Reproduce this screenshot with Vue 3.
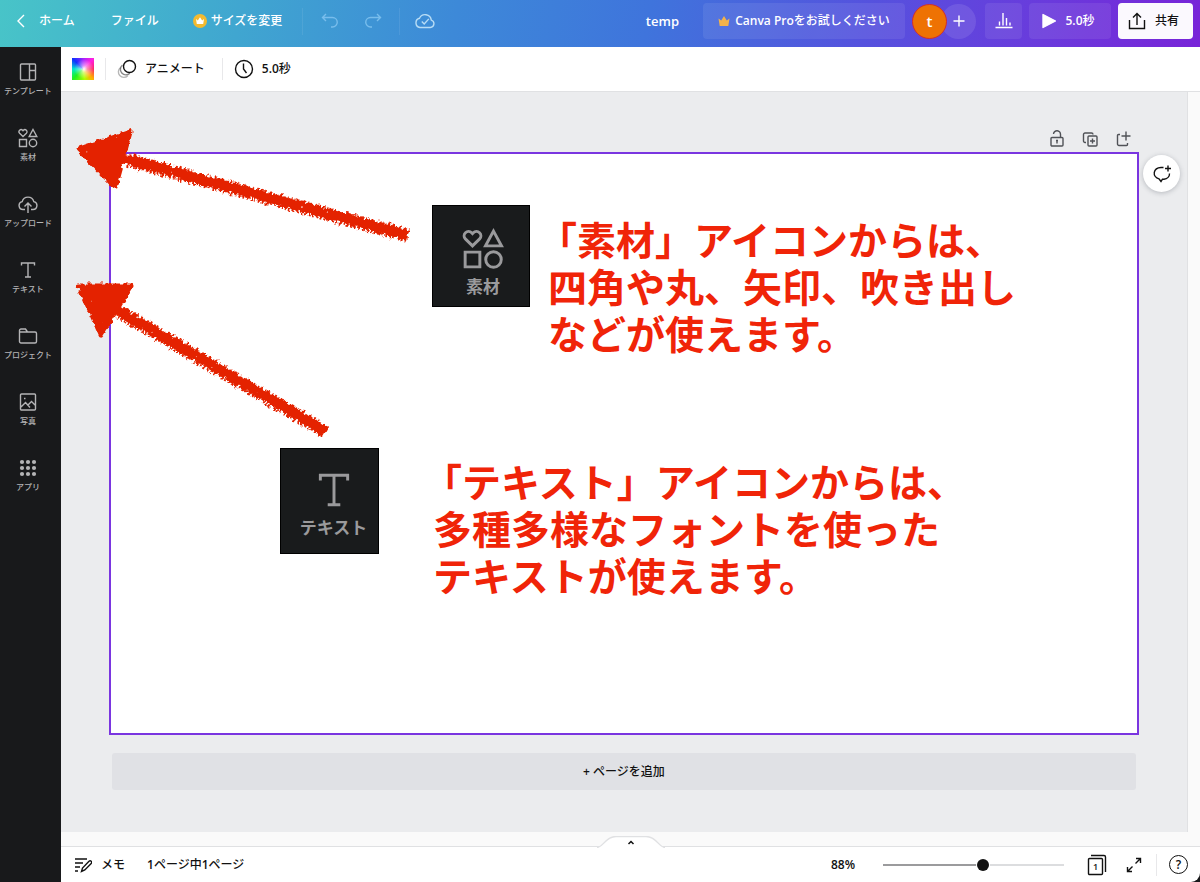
<script setup>
import { ref, computed } from 'vue'

const zoom = ref(88)
const zoomMax = 158
const fill = computed(() => `${(zoom.value / zoomMax) * 100}%`)

const tools = [
  { id: 'template', label: 'テンプレート' },
  { id: 'elements', label: '素材' },
  { id: 'upload', label: 'アップロード' },
  { id: 'text', label: 'テキスト' },
  { id: 'project', label: 'プロジェクト' },
  { id: 'photo', label: '写真' },
  { id: 'apps', label: 'アプリ' },
]
const dots = [4, 10, 16]
</script>

<template>
  <div class="app">
    <header class="topbar">
      <button class="plain home">
        <svg width="18" height="18" viewBox="0 0 18 18"><path d="M12 3 6 9l6 6" /></svg>
        <span>ホーム</span>
      </button>
      <button class="plain file">ファイル</button>
      <button class="plain resize">
        <svg width="14" height="14" viewBox="0 0 14 14" class="solid">
          <circle cx="7" cy="7" r="7" fill="#f3ba2f" />
          <path d="M3 5l1.800 1.500L7 3.200l2.200 3.300L11 5l-.8 5H3.800z" fill="#fff" />
        </svg>
        <span>サイズを変更</span>
      </button>
      <i class="rule first"></i>
      <button class="plain undo" aria-label="元に戻す">
        <svg width="18" height="18" viewBox="0 0 18 18"><path d="M5 2 1.500 5.500 5 9M2 5.500h9.500a4.700 4.700 0 0 1 0 9.500H10" /></svg>
      </button>
      <button class="plain redo" aria-label="やり直す">
        <svg width="18" height="18" viewBox="0 0 18 18"><path d="M13 2l3.500 3.500L13 9M16 5.500H6.500a4.700 4.700 0 0 0 0 9.500H8" /></svg>
      </button>
      <i class="rule"></i>
      <button class="plain cloud" aria-label="保存済み">
        <svg width="20" height="18" viewBox="0 0 20 18"><path d="M5 15.500h10.300a3.800 3.800 0 0 0 1-7.400A6.200 6.200 0 0 0 4.500 6.300 4.700 4.700 0 0 0 5 15.500zM6.800 9.500l2.400 2.400 4.600-5" /></svg>
      </button>

      <div class="right">
        <span class="title">temp</span>
        <button class="pill pro">
          <svg width="12" height="12" viewBox="0 0 12 12" class="solid"><path d="M.5 3.500 3.200 5.500 6 1l2.800 4.500 2.700-2L10.300 11H1.700z" fill="#f3b34a" /></svg>
          <span><b>Canva Pro</b>をお試しください</span>
        </button>
        <div class="people">
          <button class="avatar">t</button>
          <button class="add" aria-label="メンバーを追加">
            <svg width="12" height="12" viewBox="0 0 12 12"><path d="M6 .5v11M.5 6h11" /></svg>
          </button>
        </div>
        <button class="pill chart" aria-label="分析">
          <svg width="18" height="18" viewBox="0 0 18 18"><path d="M.5 15.500h17M4.500 13.500v-4M8 13.500V1M11.500 13.500V6M15 13.500v-3" /></svg>
        </button>
        <button class="pill play">
          <svg width="14" height="16" viewBox="0 0 14 16" class="solid"><path d="M1 1.500v13l12.500-6.500z" fill="#fff" stroke="#fff" stroke-linejoin="round" /></svg>
          <span><b>5.0</b>秒</span>
        </button>
        <button class="pill share">
          <svg width="18" height="18" viewBox="0 0 18 18"><path d="M1.500 8v8.500h15V8M9 13V1.500M5 5.500l4-4 4 4" /></svg>
          <span>共有</span>
        </button>
      </div>
    </header>

    <div class="body">
      <nav class="sidebar">
        <button v-for="t in tools" :key="t.id" class="tool">
          <svg width="20" height="20" viewBox="0 0 20 20">
            <path v-if="t.id === 'template'" d="M3.500 2h13a1 1 0 0 1 1 1v14a1 1 0 0 1-1 1h-13a1 1 0 0 1-1-1V3a1 1 0 0 1 1-1zM11.500 2v16M11.500 8.500h6" />
            <g v-else-if="t.id === 'elements'">
              <path d="M5 8.500 1.600 5.200a2 2 0 0 1 3-2.900l.4.400.4-.4a2 2 0 0 1 3 2.900zM15 1.500l3.800 7h-7.600zM1.500 11.500h7v7h-7z" />
              <circle cx="15" cy="15" r="3.700" />
            </g>
            <path v-else-if="t.id === 'upload'" d="M7 15.500H5a4 4 0 0 1-.8-7.900 6 6 0 0 1 11.600 0 4 4 0 0 1-.8 7.900h-2M10 19V9.500M6.500 12.500 10 9l3.500 3.500" />
            <path v-else-if="t.id === 'text'" d="M3.500 5.500V3h13v2.500M10 3v14M7 17h6" />
            <path v-else-if="t.id === 'project'" d="M1.500 6.500v-2a1.500 1.500 0 0 1 1.500-1.500h4.500l2 3h7.500a1.500 1.500 0 0 1 1.500 1.500v8a1.500 1.500 0 0 1-1.500 1.500H3a1.500 1.500 0 0 1-1.500-1.500zM1.500 6h9" />
            <path v-else-if="t.id === 'photo'" d="M3.500 2h13a1 1 0 0 1 1 1v14a1 1 0 0 1-1 1h-13a1 1 0 0 1-1-1V3a1 1 0 0 1 1-1zM3 15l4.500-4.500L12 15.500M10 13l3.500-3.500L17 13M6 6.500h1.500" />
            <g v-else class="dots">
              <template v-for="x in dots" :key="x">
                <circle v-for="y in dots" :key="y" :cx="x" :cy="y" r="2.100" />
              </template>
            </g>
          </svg>
          <span>{{ t.label }}</span>
        </button>
      </nav>

      <main class="main">
        <div class="toolbar">
          <button class="swatch" aria-label="背景色"></button>
          <i class="rule"></i>
          <button class="plain animate">
            <svg width="20" height="20" viewBox="0 0 20 20">
              <path d="M5.500 6a5.500 5.500 0 1 0 7.300 8.200" opacity=".5" />
              <path d="M3.500 8.500a5.500 5.500 0 1 0 7.300 8.200" opacity=".3" />
              <circle cx="12.500" cy="7.500" r="6" />
            </svg>
            <span>アニメート</span>
          </button>
          <i class="rule"></i>
          <button class="plain">
            <svg width="20" height="20" viewBox="0 0 20 20"><circle cx="10" cy="10" r="8.500" /><path d="M9.500 4.500V10l3 4" /></svg>
            <span><b>5.0</b>秒</span>
          </button>
        </div>

        <div class="scroller">
          <section class="stage">
            <div class="page-actions">
              <button class="plain" aria-label="ロック">
                <svg width="16" height="18" viewBox="0 0 16 18"><path d="M3 7.500h10a1 1 0 0 1 1 1V15a1 1 0 0 1-1 1H3a1 1 0 0 1-1-1V8.500a1 1 0 0 1 1-1zM4.500 4A3.500 3.500 0 0 1 11.500 4.500v3M8 10v3.500M7 10.500h2" /></svg>
              </button>
              <button class="plain" aria-label="複製">
                <svg width="16" height="18" viewBox="0 0 16 18"><path d="M7 6h7a1 1 0 0 1 1 1v8a1 1 0 0 1-1 1H7a1 1 0 0 1-1-1V7a1 1 0 0 1 1-1zM4 12.500H3A1.500 1.500 0 0 1 1.500 11V4.500A1.500 1.500 0 0 1 3 3h6.500A1.500 1.500 0 0 1 11 4.500M10.500 8.500v5M8 11h5" /></svg>
              </button>
              <button class="plain" aria-label="ページを追加">
                <svg width="16" height="18" viewBox="0 0 16 18"><path d="M5 4.500H3.500A1 1 0 0 0 2.500 5.500V14a1.500 1.500 0 0 0 1.500 1.500h7.500a1 1 0 0 0 1-1V13M11 1.500v9M6.500 6h9" /></svg>
              </button>
            </div>

            <article class="page">
              <svg class="arrows" width="350" height="330" viewBox="70 120 350 330">
                <defs>
                  <filter id="crayon" filterUnits="userSpaceOnUse" x="60" y="110" width="370" height="350">
                    <feTurbulence type="fractalNoise" baseFrequency=".24" numOctaves="1" seed="7" result="n" />
                    <feDisplacementMap in="SourceGraphic" in2="n" scale="7" xChannelSelector="R" yChannelSelector="G" result="d" />
                    <feTurbulence type="fractalNoise" baseFrequency=".2" numOctaves="1" seed="12" />
                    <feColorMatrix values="0 0 0 0 0  0 0 0 0 0  0 0 0 0 0  14 0 0 0 -10.600" result="holes" />
                    <feComposite in="d" in2="holes" operator="out" />
                  </filter>
                </defs>
                <g filter="url(#crayon)">
                  <path class="head" d="M79 149 130 132 115 187z" />
                  <path class="shaft" d="M122 158 407 235" />
                  <path class="grain" d="M128 160 408 236" />
                  <path class="head" d="M79 286 131 286 101 335z" />
                  <path class="shaft" d="M112 307 325 431" />
                  <path class="grain" d="M120 312 326 432" />
                </g>
              </svg>

              <figure class="tile tile-elements">
                <svg width="42" height="42" viewBox="0 0 20 20">
                  <path d="M5 8.500 1.600 5.200a2 2 0 0 1 3-2.900l.4.400.4-.4a2 2 0 0 1 3 2.900zM15 1.500l3.800 7h-7.600zM1.500 11.500h7v7h-7z" />
                  <circle cx="15" cy="15" r="3.700" />
                </svg>
                <figcaption>素材</figcaption>
              </figure>
              <p class="note note-elements">「素材」アイコンからは、<br />四角や丸、矢印、吹き出し<br />などが使えます。</p>

              <figure class="tile tile-text">
                <svg width="42" height="42" viewBox="0 0 20 20"><path d="M3.500 5.500V3h13v2.500M10 3v14M7 17h6" /></svg>
                <figcaption>テキスト</figcaption>
              </figure>
              <p class="note note-text">「テキスト」アイコンからは、<br />多種多様なフォントを使った<br />テキストが使えます。</p>

              <button class="comment" aria-label="コメント">
                <svg width="22" height="22" viewBox="0 0 22 22"><path d="M12.500 4.500H10a7 5.800 0 0 0-2 11.300l2 2.700 1.500-2.300h1.500a6.500 5.500 0 0 0 5.500-5.700M17 2.500v6M14 5.500h6" /></svg>
              </button>
            </article>

            <button class="add-page"><b>+</b> ページを追加</button>
          </section>
        </div>

        <footer class="footer">
          <button class="handle" aria-label="ページ一覧を表示">
            <svg width="68" height="12" viewBox="0 0 68 12">
              <path d="M0 11.500C7 11 8 .5 19 .5h30C60 .5 61 11 68 11.500" fill="#fff" stroke="#e0e1e3" />
              <path d="M31.500 8 34 5.500 36.500 8" fill="none" stroke="#111" stroke-width="1.500" />
            </svg>
          </button>
          <button class="plain memo">
            <svg width="18" height="18" viewBox="0 0 18 18"><path d="M1 3h12M1 7h8M1 11h5M1 15h3M7.500 15.500l1-3.500 6.500-6.800a1.500 1.500 0 0 1 2.200 2.200L10.800 14z" /></svg>
            <span>メモ</span>
          </button>
          <span class="count"><b>1</b>ページ中<b>1</b>ページ</span>
          <div class="tail">
            <label for="zoom">{{ zoom }}%</label>
            <input id="zoom" v-model.number="zoom" type="range" min="0" :max="zoomMax" :style="{ '--fill': fill }" />
            <button class="plain pages" aria-label="グリッド表示">
              <svg width="20" height="22" viewBox="0 0 20 22"><path d="M2.500 4.500h12a1 1 0 0 1 1 1v14a1 1 0 0 1-1 1h-12a1 1 0 0 1-1-1v-14a1 1 0 0 1 1-1zM4 1.500h13a1.500 1.500 0 0 1 1.500 1.500v15" /></svg>
              <b>1</b>
            </button>
            <button class="plain full" aria-label="全画面表示">
              <svg width="16" height="16" viewBox="0 0 16 16"><path d="M10 1.500h4.500V6M14.500 1.500 9.500 6.500M1.500 10v4.500H6M1.500 14.500l5-5" /></svg>
            </button>
            <i class="rule"></i>
            <button class="help">?</button>
          </div>
        </footer>
      </main>
    </div>
  </div>
</template>

<style>
body {
  background: #18191b;
}
</style>

<style scoped>
.app {
  display: flex;
  flex-direction: column;
  height: 100vh;
  color: #111;
  font: 500 12px/18px "Open Sans", "Noto Sans CJK JP", sans-serif;
}
.app * {
  box-sizing: border-box;
}
b {
  font-weight: 600;
}
button {
  margin: 0;
  padding: 0;
  border: 0;
  background: none;
  color: inherit;
  font: inherit;
  white-space: nowrap;
}
svg {
  display: block;
  flex: none;
  fill: none;
  stroke: currentColor;
  stroke-width: 1.4;
}
.solid {
  stroke: none;
}
.plain {
  display: flex;
  align-items: center;
}

.topbar {
  display: flex;
  flex: none;
  align-items: center;
  height: 47px;
  padding: 0 7px 5px 12px;
  background: linear-gradient(100deg, #48c4c8 0%, #40a6d0 20%, #3d89d8 38%, #3f74dc 54%, #5552de 72%, #6a3adc 87%, #7824d8 100%);
  color: #fff;
}
.home {
  gap: 9px;
}
.file {
  margin-left: 36px;
}
.resize {
  gap: 4px;
  margin-left: 34px;
}
.topbar .rule {
  width: 1px;
  height: 27px;
  margin-left: 17px;
  background: rgba(255, 255, 255, 0.08);
}
.topbar .rule.first {
  margin-left: 20px;
}
.undo,
.redo {
  color: #78bdec;
}
.undo {
  margin-left: 18px;
}
.redo {
  margin-left: 25px;
}
.cloud {
  margin-left: 15px;
  color: #b7dcf5;
}
.right {
  display: flex;
  align-items: center;
  gap: 7px;
  margin-left: auto;
}
.title {
  margin-right: 17px;
  font-size: 13px;
  font-weight: 600;
}
.pill {
  display: flex;
  align-items: center;
  justify-content: center;
  height: 36px;
  border-radius: 4px;
  background: rgba(255, 255, 255, 0.08);
}
.pro {
  gap: 5px;
  width: 202px;
}
.people {
  display: flex;
}
.avatar,
.add {
  display: grid;
  place-items: center;
  width: 35px;
  height: 35px;
  border-radius: 50%;
}
.avatar {
  z-index: 1;
  border: 1px solid #cf2f2f;
  background: #ee7203;
  font-size: 15px;
  font-weight: 600;
}
.add {
  margin-left: -6px;
  background: rgba(255, 255, 255, 0.1);
}
.chart {
  width: 37px;
  margin-left: 2px;
}
.play {
  gap: 9px;
  width: 82px;
  padding-right: 3px;
}
.share {
  gap: 9px;
  width: 75px;
  padding-right: 4px;
  background: #fbf9fe;
  color: #111;
}

.body {
  display: flex;
  flex: 1;
  min-height: 0;
}
.sidebar {
  display: flex;
  flex: none;
  flex-direction: column;
  width: 61px;
  padding: 15px 5px 0 0;
  background: #18191b;
  color: #b4b4b6;
}
.tool {
  display: flex;
  flex-direction: column;
  align-items: center;
  gap: 3px;
  height: 66px;
  font-size: 8px;
  line-height: 12px;
}
.dots {
  fill: currentColor;
  stroke: none;
}

.main {
  display: flex;
  flex: 1;
  flex-direction: column;
  min-width: 0;
  background: #fafafa;
}
.toolbar {
  display: flex;
  flex: none;
  align-items: center;
  gap: 11px;
  height: 45px;
  padding: 0 11px;
  border-bottom: 1px solid #e0e1e3;
  background: #fff;
}
.toolbar .rule {
  width: 1px;
  height: 22px;
  background: #e8e8ea;
}
.toolbar .plain {
  gap: 8px;
}
.toolbar .animate {
  margin-right: 6px;
}
.swatch {
  width: 22px;
  height: 22px;
  background:
    radial-gradient(circle at 55% 50%, #fff 0, rgba(255, 255, 255, 0.5) 20%, rgba(255, 255, 255, 0) 60%),
    conic-gradient(#a020ff 0deg, #ff20e0 45deg, #ff2060 90deg, #ffb000 135deg, #b0ff00 170deg, #20f020 225deg, #00e8d0 270deg, #1030ff 315deg, #a020ff 360deg);
}
.scroller {
  flex: 1;
  min-height: 0;
  padding: 0 12px 14px 0;
}
.stage {
  display: flex;
  flex-direction: column;
  height: 100%;
  padding: 36px 48px 0;
  border-right: 1px solid #e0e1e3;
  background: #ebecee;
}
.page-actions {
  display: flex;
  gap: 17px;
  justify-content: flex-end;
  padding: 2px 8px 4px 0;
  color: #505257;
}
.page {
  position: relative;
  flex: none;
  aspect-ratio: 1030 / 583;
  border: 2px solid #7a35e0;
  background: #fff;
}
.arrows {
  position: absolute;
  top: -34px;
  left: -41px;
}
.head {
  fill: #e42400;
  stroke: #e42400;
  stroke-width: 5;
  stroke-linejoin: round;
}
.shaft {
  stroke: #e42400;
  stroke-width: 10;
}
.grain {
  stroke: #e42400;
  stroke-width: 14;
  stroke-dasharray: 2 2;
}
.tile {
  position: absolute;
  display: flex;
  flex-direction: column;
  align-items: center;
  margin: 0;
  border: 1px solid #000;
  background: #191b1c;
  color: #9a9a9c;
  font-size: 17px;
  font-weight: 700;
  line-height: 34px;
}
.tile-elements {
  top: 51px;
  left: 321px;
  width: 98px;
  height: 102px;
  padding: 22px 0 0 4px;
}
.tile-text {
  top: 294px;
  left: 169px;
  width: 99px;
  height: 106px;
  padding: 20px 0 0 8px;
}
.note {
  position: absolute;
  margin: 0;
  color: #f02408;
  font: 700 39px/47px "Noto Sans CJK JP", sans-serif;
  text-indent: -10px;
  white-space: nowrap;
}
.note-elements {
  top: 61px;
  left: 437px;
}
.note-text {
  top: 303px;
  left: 322px;
}
.comment {
  position: absolute;
  top: 1px;
  right: -43px;
  display: grid;
  place-items: center;
  width: 37px;
  height: 37px;
  border-radius: 50%;
  background: #fff;
  box-shadow: 0 1px 5px rgba(60, 65, 80, 0.3);
}
.add-page {
  flex: none;
  height: 37px;
  margin: 18px 3px 0;
  border-radius: 3px;
  background: #e0e1e5;
}

.footer {
  position: relative;
  display: flex;
  flex: none;
  align-items: center;
  height: 36px;
  padding: 0 12px 0 13px;
  border-top: 1px solid #e0e1e3;
  border-radius: 0 0 9px 0;
  background: #fff;
  box-shadow: 5px 5px 0 #18191b;
}
.handle {
  position: absolute;
  top: -11px;
  left: 50%;
  margin-left: -34px;
}
.memo {
  gap: 9px;
}
.count {
  margin-left: 22px;
}
.tail {
  display: flex;
  align-items: center;
  margin-left: auto;
}
.tail label {
  font-weight: 600;
}
input[type="range"] {
  width: 181px;
  height: 14px;
  margin: 0 23px 0 28px;
  appearance: none;
  background: linear-gradient(90deg, #9b9b9d var(--fill), #dcdddf var(--fill)) center / 100% 2px no-repeat;
}
input[type="range"]::-webkit-slider-thumb {
  width: 12px;
  height: 12px;
  appearance: none;
  border-radius: 50%;
  background: #111;
  box-shadow: 0 0 0 1px #fff;
}
.pages {
  position: relative;
}
.pages b {
  position: absolute;
  top: 4px;
  left: 6px;
  font-size: 9px;
}
.full {
  margin: 0 14px 0 19px;
}
.tail .rule {
  width: 1px;
  height: 22px;
  margin-right: 12px;
  background: #e8e8ea;
}
.help {
  width: 19px;
  height: 19px;
  border: 1px solid #111;
  border-radius: 50%;
  font-weight: 600;
  line-height: 17px;
}
</style>
